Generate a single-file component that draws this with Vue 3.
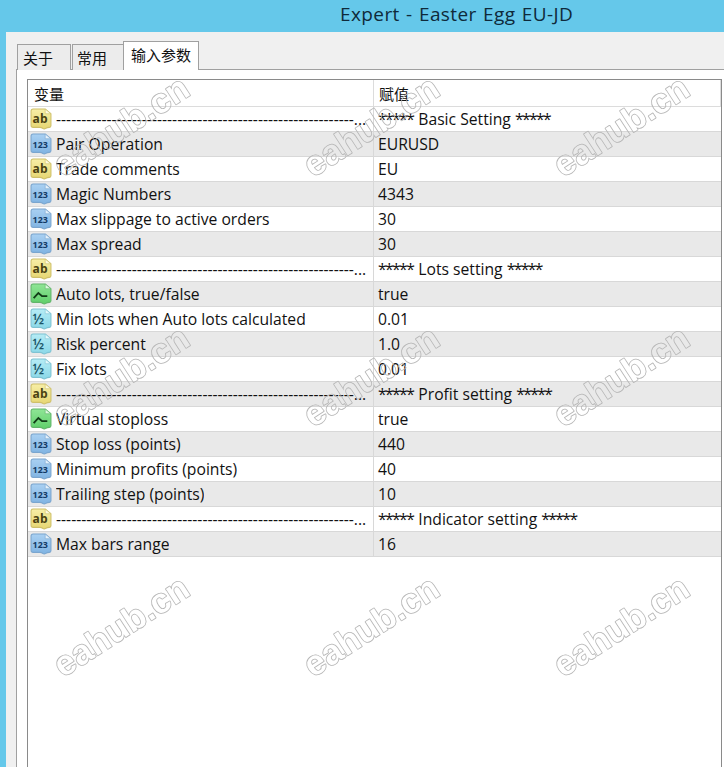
<script setup>
const dash = '-'.repeat(59) + '...'
const rows = [
  ['ab', dash, '***** Basic Setting *****'],
  ['num', 'Pair Operation', 'EURUSD'],
  ['ab', 'Trade comments', 'EU'],
  ['num', 'Magic Numbers', '4343'],
  ['num', 'Max slippage to active orders', '30'],
  ['num', 'Max spread', '30'],
  ['ab', dash, '***** Lots setting *****'],
  ['bool', 'Auto lots, true/false', 'true'],
  ['frac', 'Min lots when Auto lots calculated', '0.01'],
  ['frac', 'Risk percent', '1.0'],
  ['frac', 'Fix lots', '0.01'],
  ['ab', dash, '***** Profit setting *****'],
  ['bool', 'Virtual stoploss', 'true'],
  ['num', 'Stop loss (points)', '440'],
  ['num', 'Minimum profits (points)', '40'],
  ['num', 'Trailing step (points)', '10'],
  ['ab', dash, '***** Indicator setting *****'],
  ['num', 'Max bars range', '16'],
]
const palette = {
  ab: { top: '#f7eea6', bottom: '#e6d672', edge: '#cfc06a', fold: '#fdf9dc', ink: '#4a4212' },
  num: { top: '#a9d0f2', bottom: '#7fb3e2', edge: '#7ba6cf', fold: '#e3f0fb', ink: '#123a66' },
  bool: { top: '#8fe596', bottom: '#5fcf6a', edge: '#62b56b', fold: '#dcf8de', ink: '#123c18' },
  frac: { top: '#b6ecf5', bottom: '#8ad8e8', edge: '#7fc3d3', fold: '#e4f8fb', ink: '#1b5566' },
}
const kinds = Object.keys(palette)
const parts = (v) => v.split(/(\*+)/).filter(Boolean)
const marks = []
for (const y of [126, 376, 626]) for (const x of [121, 371, 621]) marks.push(`translate(${x} ${y}) rotate(-33)`)
</script>

<template>
  <div class="screen">
    <header class="titlebar"><h1>Expert - Easter Egg EU-JD</h1></header>
    <main class="dialog">
      <nav class="tabs">
        <span class="tab first">关于</span>
        <span class="tab second">常用</span>
        <span class="tab active">输入参数</span>
      </nav>
      <section class="page">
        <div class="table">
          <div class="thead">
            <div class="hname">变量</div>
            <div class="hvalue">赋值</div>
          </div>
          <div v-for="(r, i) in rows" :key="i" class="row">
            <div class="name">
              <svg class="icon" viewBox="0.5 0.5 21 21" width="22" height="22">
                <path d="M1.5 3.5 Q1.5 1.5 3.5 1.5 H15 L20.5 6 V17.5 Q20.5 19 19 19 Q17 19 15.5 20 Q14 21 12.5 19.8 Q11.5 19 10 19 H3.5 Q1.5 19 1.5 17 Z"
                  :fill="`url(#grad-${r[0]})`" :stroke="palette[r[0]].edge" stroke-width="1" />
                <path d="M15 1.5 V6 H20.5 Z" :fill="palette[r[0]].fold" :stroke="palette[r[0]].edge" stroke-width="0.6" />
                <text v-if="r[0] === 'ab'" x="3" y="15" class="g-ab" :fill="palette.ab.ink">ab</text>
                <text v-else-if="r[0] === 'num'" x="3" y="15" class="g-num" :fill="palette.num.ink">123</text>
                <text v-else-if="r[0] === 'frac'" x="3" y="15.5" class="g-frac" :fill="palette.frac.ink">½</text>
                <path v-else d="M4 15 L8.5 10 L12 13 H17" fill="none" :stroke="palette.bool.ink" stroke-width="1.8" />
              </svg>
              <span class="label">{{ r[1] }}</span>
            </div>
            <div class="value"><span v-for="(p, j) in parts(r[2])" :key="j" :class="{ stars: p[0] === '*' }">{{ p }}</span></div>
          </div>
        </div>
      </section>
    </main>
    <svg class="marks" width="724" height="767" viewBox="0 0 724 767">
      <defs>
        <linearGradient v-for="k in kinds" :id="`grad-${k}`" :key="k" x1="0" y1="0" x2="0" y2="1">
          <stop offset="0" :stop-color="palette[k].top" />
          <stop offset="1" :stop-color="palette[k].bottom" />
        </linearGradient>
        <mask id="wm" maskUnits="userSpaceOnUse" x="0" y="0" width="724" height="767">
          <rect width="724" height="767" fill="#000" />
          <g v-for="(t, i) in marks" :key="'o' + i" :transform="t">
            <text class="wm outer" text-anchor="middle" y="12">eahub.cn</text>
          </g>
          <g v-for="(t, i) in marks" :key="'i' + i" :transform="t">
            <text class="wm inner" text-anchor="middle" y="12">eahub.cn</text>
          </g>
        </mask>
      </defs>
      <rect width="724" height="767" fill="#b4b4b4" mask="url(#wm)" />
    </svg>
  </div>
</template>

<style>
html, body { margin: 0; background: #65c8ea; }
</style>

<style scoped>
.screen {
  position: relative;
  width: 724px;
  height: 767px;
  overflow: hidden;
  background: #65c8ea;
  display: flex;
  flex-direction: column;
  font-family: "Open Sans", "Noto Sans CJK SC", sans-serif;
  color: #111;
}
.titlebar { height: 32px; flex: none; display: flex; padding-left: 340px; box-sizing: border-box; }
.titlebar h1 {
  margin: 0;
  font-size: 19px;
  font-weight: 400;
  line-height: 28px;
  letter-spacing: 0.4px;
  word-spacing: 1px;
  color: #0f2a3a;
  white-space: nowrap;
}
.dialog { flex: 1; margin-left: 6px; background: #f0f0f0; padding: 10px 0 0 10px; display: flex; flex-direction: column; min-height: 0; }
.tabs { display: flex; height: 28px; align-items: flex-end; flex: none; position: relative; z-index: 1; margin-bottom: -1px; padding-left: 1px; }
.tab {
  box-sizing: border-box;
  height: 26px;
  border: 1px solid #a0a0a0;
  border-bottom: none;
  background: #ececec;
  font-family: "Noto Sans CJK SC", sans-serif;
  font-size: 15px;
  line-height: 25px;
  padding-left: 5px;
}
.first { width: 54px; }
.second { width: 52px; margin-left: 1px; padding-left: 4px; }
.active { width: 76px; height: 29px; background: #fff; line-height: 26px; padding-left: 7px; margin-left: -1px; }
.page { flex: 1; background: #fff; border: 1px solid #a0a0a0; border-right: none; border-bottom: none; padding: 9px 0 0 10px; min-height: 0; }
.table { border-left: 1px solid #8a8a8a; border-top: 1px solid #8a8a8a; border-right: 1px solid #8a8a8a; margin-right: 2px; height: 100%; box-sizing: border-box; }
.thead { display: flex; height: 27px; box-sizing: border-box; border-bottom: 1px solid #dcdcdc; font-family: "Noto Sans CJK SC", sans-serif; font-size: 15px; line-height: 28px; background: #fff; }
.hname { width: 346px; flex: none; box-sizing: border-box; padding-left: 6px; border-right: 1px solid #dcdcdc; }
.hvalue { flex: 1; padding-left: 5px; border-right: 1px solid #dcdcdc; }
.row { display: flex; height: 25px; box-sizing: border-box; border-bottom: 1px solid #d8d8d8; font-size: 15.7px; line-height: 24px; }
.row:nth-child(odd) { background: #e9e9e9; }
.name { width: 346px; flex: none; box-sizing: border-box; display: flex; border-right: 1px solid #d8d8d8; overflow: hidden; }
.icon { flex: none; margin: 1px 4px 0 2px; }
.label { white-space: nowrap; overflow: hidden; }
.value { flex: 1; padding-left: 4px; white-space: nowrap; }
.stars { letter-spacing: -1.6px; margin-right: 1px; }
.g-ab { font: 700 11.5px "Open Sans", sans-serif; }
.g-num { font: 700 8.5px "Open Sans", sans-serif; }
.g-frac { font: 600 13.5px "Open Sans", sans-serif; }
.marks { position: absolute; left: 0; top: 0; pointer-events: none; }
.wm { font-family: "Liberation Sans", sans-serif; font-size: 35px; font-weight: 700; stroke-linejoin: round; stroke-linecap: round; }
.outer { fill: #fff; stroke: #fff; stroke-width: 1.5px; }
.inner { fill: #000; stroke: none; }
</style>
